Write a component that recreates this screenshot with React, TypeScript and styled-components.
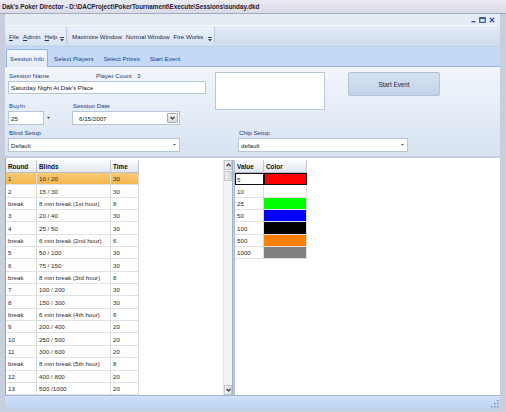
import React from "react";
import styled, { createGlobalStyle } from "styled-components";

const GlobalStyle = createGlobalStyle`
  html, body { margin: 0; padding: 0; background: #c8d0de; }
  body { font-family: "Liberation Sans", Arial, sans-serif; }
  * { box-sizing: border-box; }
`;

const Window = styled.div`
  width: 506px;
  height: 412px;
  display: flex;
  flex-direction: column;
  background: #c7cedc;
  overflow: hidden;
`;

const TitleBar = styled.div`
  height: 14px;
  line-height: 13px;
  padding-left: 2px;
  font-size: 6.3px;
  font-weight: bold;
  color: #1c1c38;
  background: linear-gradient(#ebebf2, #d9dae5);
  border-bottom: 1px solid #a3abc2;
  white-space: nowrap;
`;

const Body = styled.div`
  flex: 1;
  display: flex;
  flex-direction: column;
  padding: 0 6px 3px 5px;
  min-height: 0;
`;

const MdiBar = styled.div`
  height: 11px;
  display: flex;
  align-items: center;
  justify-content: flex-end;
  gap: 3px;
  padding-right: 5px;
  background: #e6ecf4;
`;

const ToolBand = styled.div`
  height: 22px;
  display: flex;
  align-items: stretch;
  background: linear-gradient(#e3ebf6, #cfdcee);
  border-top: 1px solid #f6f9fc;
  border-bottom: 1px solid #bfd0e8;
  padding: 1px 0 1px 1px;
  gap: 2px;
`;

const ToolStrip = styled.div<{ $w: number }>`
  width: ${(p) => p.$w}px;
  display: flex;
  align-items: center;
  gap: 4px;
  padding-left: 3px;
  position: relative;
  border-radius: 2px;
  background: linear-gradient(#eef3fa, #d6e2f2);
  border-right: 1px solid #b8c8e0;
  font-size: 6.2px;
  color: #1e2a44;
  white-space: nowrap;
`;

const MenuItem = styled.span`
  white-space: nowrap;
  &::first-letter { text-decoration: underline; }
`;

const ToolButton = styled.span`
  white-space: nowrap;
`;

const Grip = styled.div`
  position: absolute;
  right: 2px;
  bottom: 3px;
  width: 4px;
  height: 5px;
  display: flex;
  flex-direction: column;
  align-items: center;
  gap: 1px;
`;

const TabStrip = styled.div`
  height: 20px;
  display: flex;
  align-items: flex-end;
  padding-left: 1px;
  background: #c2d9f8;
  border-bottom: 1px solid #8eb1de;
`;

const Tab = styled.div<{ $active?: boolean }>`
  height: ${(p) => (p.$active ? 18 : 16)}px;
  display: flex;
  align-items: center;
  padding: 0 3px;
  margin-right: 2px;
  font-size: 6.2px;
  color: #15428b;
  background: ${(p) => (p.$active ? "linear-gradient(#f3f7fc, #e3ebf6)" : "transparent")};
  border: ${(p) => (p.$active ? "1px solid #8db2e3" : "1px solid transparent")};
  border-bottom: none;
  border-radius: 2px 2px 0 0;
  margin-bottom: ${(p) => (p.$active ? -1 : 0)}px;
  white-space: nowrap;
`;

const Panel = styled.div`
  height: 91px;
  padding: 5px 0 0 3px;
  background: linear-gradient(#f2f6fb, #d7e3f2);
  border-bottom: 2px solid #c3cfe0;
  display: flex;
  flex-direction: column;
`;

const TopRow = styled.div`
  display: flex;
  align-items: flex-start;
`;

const LeftCol = styled.div`
  width: 198px;
  display: flex;
  flex-direction: column;
`;

const LabelRow = styled.div`
  height: 9px;
  display: flex;
`;

const Label = styled.div<{ $w?: number }>`
  width: ${(p) => (p.$w ? `${p.$w}px` : "auto")};
  height: 9px;
  line-height: 8px;
  padding-left: 1px;
  font-size: 6.2px;
  color: #1b3a73;
  white-space: nowrap;
`;

const TextBox = styled.div<{ $w: number; $h?: number }>`
  width: ${(p) => p.$w}px;
  height: ${(p) => p.$h ?? 13}px;
  display: flex;
  align-items: center;
  padding-left: 2px;
  background: #ffffff;
  border: 1px solid #b5c6dd;
  font-size: 6.2px;
  color: #202020;
  white-space: nowrap;
`;

const FieldRow = styled.div`
  display: flex;
  margin-top: 8px;
`;

const FieldGroup = styled.div<{ $w?: number }>`
  width: ${(p) => (p.$w ? `${p.$w}px` : "auto")};
  display: flex;
  flex-direction: column;
`;

const InputRow = styled.div`
  display: flex;
  align-items: center;
`;

const Combo = styled.div<{ $w: number }>`
  width: ${(p) => p.$w}px;
  height: 14px;
  display: flex;
  align-items: center;
  justify-content: space-between;
  padding-left: 2px;
  background: #ffffff;
  border: 1px solid #b5c6dd;
  font-size: 6.2px;
  color: #202020;
  white-space: nowrap;
`;

const DropArrow = styled.div`
  width: 9px;
  height: 12px;
  display: flex;
  align-items: center;
  justify-content: center;
`;

const DateText = styled.span`
  padding-left: 4px;
`;

const DateButton = styled.div`
  width: 11px;
  height: 10px;
  margin-right: 1px;
  display: flex;
  align-items: center;
  justify-content: center;
  background: linear-gradient(#f4f4f6, #d6d8de);
  border: 1px solid #a8acb8;
  border-radius: 1px;
`;

const NotesBox = styled.div`
  width: 110px;
  height: 38px;
  margin-left: 9px;
  background: #ffffff;
  border: 1px solid #b7c7de;
`;

const StartButton = styled.div`
  width: 92px;
  height: 24px;
  margin-left: 23px;
  display: flex;
  align-items: center;
  justify-content: center;
  font-size: 6.3px;
  color: #1e2a44;
  background: linear-gradient(#d6e2f2, #c3d3ea);
  border: 1px solid #b0c2dc;
  border-radius: 2px;
`;

const SetupRow = styled.div`
  display: flex;
  margin-top: 4px;
`;

const GridArea = styled.div`
  flex: 1;
  min-height: 0;
  display: flex;
  padding-top: 2px;
  background: #ffffff;
  border-left: 1px solid #9ba9bf;
`;

const LeftGrid = styled.div`
  width: 226px;
  display: flex;
  overflow: hidden;
`;

const GridBody = styled.div`
  flex: 1;
  overflow: hidden;
`;

const Table = styled.div<{ $cols: string }>`
  display: grid;
  grid-template-columns: ${(p) => p.$cols};
  grid-auto-rows: 12.35px;
  grid-template-rows: 13px;
  width: max-content;
`;

const HeadCell = styled.div`
  display: flex;
  align-items: center;
  padding-left: 2px;
  font-size: 6.4px;
  font-weight: bold;
  color: #111;
  background: linear-gradient(#fbfcfd, #e2e6ee);
  border-right: 1px solid #c3c8d2;
  border-bottom: 1px solid #b9bfcb;
`;

const Cell = styled.div<{ $sel?: boolean }>`
  display: flex;
  align-items: center;
  padding-left: 2px;
  font-size: 6.2px;
  color: #2a2a2a;
  white-space: nowrap;
  background: ${(p) => (p.$sel ? "linear-gradient(#f9ca74, #f4b64e)" : "#ffffff")};
  border-right: 1px solid #dcdcdc;
  border-bottom: 1px solid #e2e2e2;
`;

const ValueCell = styled(Cell)<{ $focus?: boolean }>`
  ${(p) => (p.$focus ? "border: 1.5px solid #111; padding-left: 1px;" : "")}
`;

const ColorCell = styled.div<{ $c: string; $focus?: boolean }>`
  background: ${(p) => p.$c};
  border-right: 1px solid #dcdcdc;
  border-bottom: 1px solid #e2e2e2;
  ${(p) => (p.$focus ? "border: 1.5px solid #111;" : "")}
`;

const ScrollBar = styled.div`
  width: 9px;
  display: flex;
  flex-direction: column;
  background: #f3f3f5;
  border-left: 1px solid #e4e4e8;
`;

const ScrollBtn = styled.div`
  height: 10px;
  display: flex;
  align-items: center;
  justify-content: center;
  background: linear-gradient(90deg, #f4f4f6, #dcdde2);
  border: 1px solid #c4c6ce;
`;

const Thumb = styled.div`
  height: 10px;
  margin-top: 1px;
  background: linear-gradient(90deg, #f0f0f2, #d8d9de);
  border: 1px solid #c8cad2;
`;

const Track = styled.div`
  flex: 1;
`;

const Splitter = styled.div`
  width: 3px;
  background: #c4d2e6;
  border-left: 1px solid #9eb0c8;
  border-right: 1px solid #a9bad2;
`;

const RightGrid = styled.div`
  flex: 1;
  overflow: hidden;
`;

const StatusBar = styled.div`
  height: 14px;
  display: flex;
  justify-content: flex-end;
  align-items: flex-end;
  padding: 0 1px 1px 0;
  background: linear-gradient(#cfe0f8, #bcd3f3);
  border-top: 1px solid #9fb6d6;
`;

const Down = ({ c = "#333", w = 5 }: { c?: string; w?: number }) => (
  <svg width={w} height={w * 0.6} viewBox="0 0 5 3">
    <path d="M0 0 H5 L2.5 3 Z" fill={c} />
  </svg>
);

const Chevron = ({ up }: { up?: boolean }) => (
  <svg width="5" height="4" viewBox="0 0 5 4">
    <path d={up ? "M0.5 3 L2.5 1 L4.5 3" : "M0.5 1 L2.5 3 L4.5 1"} stroke="#333" strokeWidth="1.1" fill="none" />
  </svg>
);

const OverflowGrip = () => (
  <Grip>
    <svg width="4" height="5" viewBox="0 0 4 5">
      <rect x="0" y="0" width="4" height="1" fill="#445" />
      <path d="M0 2 H4 L2 4.5 Z" fill="#445" />
    </svg>
  </Grip>
);

const MdiButtons = () => (
  <>
    <svg width="5" height="6" viewBox="0 0 5 6">
      <rect x="0.5" y="4" width="4" height="1.4" fill="#3656a8" />
    </svg>
    <svg width="7" height="6" viewBox="0 0 7 6">
      <rect x="0.7" y="0.7" width="5.6" height="4.6" stroke="#3656a8" strokeWidth="1.2" fill="none" />
      <rect x="0.7" y="0.7" width="5.6" height="1.4" fill="#3656a8" />
    </svg>
    <svg width="6" height="6" viewBox="0 0 6 6">
      <path d="M0.8 0.8 L5.2 5.2 M5.2 0.8 L0.8 5.2" stroke="#3656a8" strokeWidth="1.3" />
    </svg>
  </>
);

const SizeGrip = () => (
  <svg width="8" height="8" viewBox="0 0 8 8">
    {[
      [6, 0], [6, 3], [3, 3], [6, 6], [3, 6], [0, 6],
    ].map(([x, y]) => (
      <rect key={`${x}-${y}`} x={x} y={y} width="1.5" height="1.5" fill="#7d93b4" />
    ))}
  </svg>
);

type Round = { round: string; blinds: string; time: string };

const rounds: Round[] = [
  { round: "1", blinds: "10 / 20", time: "30" },
  { round: "2", blinds: "15 / 30", time: "30" },
  { round: "break", blinds: "8 min break (1st hour)", time: "8" },
  { round: "3", blinds: "20 / 40", time: "30" },
  { round: "4", blinds: "25 / 50", time: "30" },
  { round: "break", blinds: "6 min break (2nd hour)", time: "6" },
  { round: "5", blinds: "50 / 100", time: "30" },
  { round: "6", blinds: "75 / 150", time: "30" },
  { round: "break", blinds: "8 min break (3rd hour)", time: "8" },
  { round: "7", blinds: "100 / 200", time: "30" },
  { round: "8", blinds: "150 / 300", time: "30" },
  { round: "break", blinds: "6 min break (4th hour)", time: "6" },
  { round: "9", blinds: "200 / 400", time: "20" },
  { round: "10", blinds: "250 / 500", time: "20" },
  { round: "11", blinds: "300 / 600", time: "20" },
  { round: "break", blinds: "8 min break (5th hour)", time: "8" },
  { round: "12", blinds: "400 / 800", time: "20" },
  { round: "13", blinds: "500 /1000", time: "20" },
];

const chips = [
  { value: "5", color: "#ff0000" },
  { value: "10", color: "#ffffff" },
  { value: "25", color: "#00ff00" },
  { value: "50", color: "#0000ff" },
  { value: "100", color: "#000000" },
  { value: "500", color: "#ff8000" },
  { value: "1000", color: "#808080" },
];

export default function App() {
  return (
    <>
      <GlobalStyle />
      <Window>
        <TitleBar>Dak's Poker Director - D:\DACProject\PokerTournament\Execute\Sessions\sunday.dkd</TitleBar>
        <Body>
          <MdiBar>
            <MdiButtons />
          </MdiBar>
          <ToolBand>
            <ToolStrip $w={61}>
              <MenuItem>File</MenuItem>
              <MenuItem>Admin</MenuItem>
              <MenuItem>Help</MenuItem>
              <OverflowGrip />
            </ToolStrip>
            <ToolStrip $w={146}>
              <ToolButton>Maximize Window</ToolButton>
              <ToolButton>Normal Window</ToolButton>
              <ToolButton>Fire Works</ToolButton>
              <OverflowGrip />
            </ToolStrip>
          </ToolBand>
          <TabStrip>
            <Tab $active>Session Info</Tab>
            <Tab>Select Players</Tab>
            <Tab>Select Prizes</Tab>
            <Tab>Start Event</Tab>
          </TabStrip>
          <Panel>
            <TopRow>
              <LeftCol>
                <LabelRow>
                  <Label $w={87}>Session Name</Label>
                  <Label>Player Count : 3</Label>
                </LabelRow>
                <TextBox $w={198}>Saturday Night At Dak's Place</TextBox>
                <FieldRow>
                  <FieldGroup $w={64}>
                    <Label>BuyIn</Label>
                    <InputRow>
                      <TextBox $w={36} $h={14}>25</TextBox>
                      <DropArrow>
                        <Down w={3} />
                      </DropArrow>
                    </InputRow>
                  </FieldGroup>
                  <FieldGroup>
                    <Label>Session Date</Label>
                    <Combo $w={108}>
                      <DateText>6/15/2007</DateText>
                      <DateButton>
                        <Chevron />
                      </DateButton>
                    </Combo>
                  </FieldGroup>
                </FieldRow>
              </LeftCol>
              <NotesBox />
              <StartButton>Start Event</StartButton>
            </TopRow>
            <SetupRow>
              <FieldGroup $w={230}>
                <Label>Blind Setup</Label>
                <Combo $w={172}>
                  Default
                  <DropArrow>
                    <Down c="#556" w={3} />
                  </DropArrow>
                </Combo>
              </FieldGroup>
              <FieldGroup>
                <Label>Chip Setup</Label>
                <Combo $w={170}>
                  default
                  <DropArrow>
                    <Down c="#556" w={3} />
                  </DropArrow>
                </Combo>
              </FieldGroup>
            </SetupRow>
          </Panel>
          <GridArea>
            <LeftGrid>
              <GridBody>
                <Table $cols="31px 74px 28px">
                  <HeadCell>Round</HeadCell>
                  <HeadCell>Blinds</HeadCell>
                  <HeadCell>Time</HeadCell>
                  {rounds.map((r, i) => (
                    <React.Fragment key={i}>
                      <Cell $sel={i === 0}>{r.round}</Cell>
                      <Cell $sel={i === 0}>{r.blinds}</Cell>
                      <Cell $sel={i === 0}>{r.time}</Cell>
                    </React.Fragment>
                  ))}
                </Table>
              </GridBody>
              <ScrollBar>
                <ScrollBtn>
                  <Chevron up />
                </ScrollBtn>
                <Thumb />
                <Track />
                <ScrollBtn>
                  <Chevron />
                </ScrollBtn>
              </ScrollBar>
            </LeftGrid>
            <Splitter />
            <RightGrid>
              <Table $cols="29px 43px">
                <HeadCell>Value</HeadCell>
                <HeadCell>Color</HeadCell>
                {chips.map((c, i) => (
                  <React.Fragment key={c.value}>
                    <ValueCell $focus={i === 0}>{c.value}</ValueCell>
                    <ColorCell $c={c.color} $focus={i === 0} />
                  </React.Fragment>
                ))}
              </Table>
            </RightGrid>
          </GridArea>
          <StatusBar>
            <SizeGrip />
          </StatusBar>
        </Body>
      </Window>
    </>
  );
}
